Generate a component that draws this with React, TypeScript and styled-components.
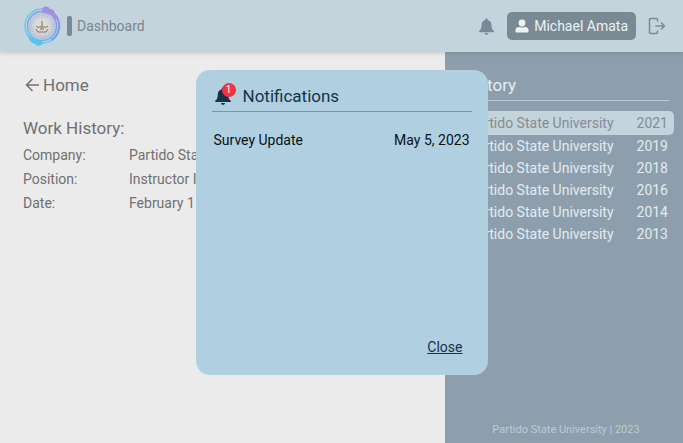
import React from 'react';
import styled, { createGlobalStyle } from 'styled-components';

const GlobalStyle = createGlobalStyle`
  *, *::before, *::after { box-sizing: border-box; }
  body {
    margin: 0;
    background: #ebebeb;
    font-family: Roboto, 'Liberation Sans', sans-serif;
    font-size: 14px;
    color: #707070;
  }
  h1, h2, p, dl, dd, ul { margin: 0; padding: 0; font-weight: 400; }
  button { font: inherit; border: 0; background: none; padding: 0; cursor: pointer; }
`;

const Page = styled.div`
  min-height: 100vh;
  display: flex;
  flex-direction: column;
`;

const Header = styled.header`
  display: flex;
  align-items: center;
  height: 52px;
  padding: 0 17px 0 24px;
  background: #c4d4dd;
  box-shadow: 0 1px 4px rgba(70, 80, 90, 0.25);
  z-index: 1;
`;

const Divider = styled.span`
  width: 5px;
  height: 20px;
  margin: 0 5px;
  border-radius: 2px;
  background: #798a96;
`;

const Title = styled.h1`
  font-size: 14px;
  color: #7b868d;
`;

const Actions = styled.div`
  display: flex;
  align-items: center;
  gap: 12px;
  margin-left: auto;
`;

const IconButton = styled.button`
  display: flex;
  color: #788a96;
`;

const UserButton = styled.button`
  display: flex;
  align-items: center;
  gap: 5px;
  height: 28px;
  padding: 0 8px;
  border-radius: 5px;
  background: #7a8a95;
  color: #edf1f4;
`;

const Body = styled.div`
  flex: 1;
  display: grid;
  grid-template-columns: minmax(0, 1fr) 238px;
`;

const Main = styled.main`
  padding: 23px;
`;

const BackLink = styled.a`
  display: inline-flex;
  align-items: center;
  gap: 4px;
  color: inherit;
  font-size: 17px;
  line-height: 20px;
  text-decoration: none;
`;

const SectionTitle = styled.h2`
  margin-top: 20px;
  font-size: 17px;
  line-height: 24px;
`;

const Details = styled.dl`
  display: grid;
  grid-template-columns: 106px 1fr;
  margin-top: 3px;
  line-height: 24px;
`;

const Sidebar = styled.aside`
  display: flex;
  flex-direction: column;
  padding: 22px 9px 4px;
  background: #8d9fac;
  color: #e7edf1;
`;

const SidebarTitle = styled.h2`
  margin: 0 5px 10px;
  padding: 0 3px 4px;
  border-bottom: 1px solid #bccbd5;
  font-size: 17px;
  line-height: 22px;
`;

const HistoryList = styled.ul`
  list-style: none;
`;

const HistoryItem = styled.button<{ $active?: boolean }>`
  display: flex;
  justify-content: flex-end;
  gap: 23px;
  width: 100%;
  padding: 0 6px;
  border-radius: 5px;
  line-height: ${(p) => (p.$active ? '24px' : '22px')};
  background: ${(p) => (p.$active ? '#c4d4dd' : 'transparent')};
  color: ${(p) => (p.$active ? '#858c90' : '#e4ebf0')};
`;

const Footer = styled.footer`
  margin-top: auto;
  padding-left: 4px;
  font-size: 11px;
  line-height: 18px;
  text-align: center;
  color: #bccbd5;
`;

const Overlay = styled.div`
  position: fixed;
  inset: 0;
  z-index: 2;
  display: flex;
  align-items: center;
  justify-content: center;
  padding-top: 2px;
`;

const Modal = styled.section`
  display: flex;
  flex-direction: column;
  width: 292px;
  min-height: 305px;
  padding: 12px 16px 17px;
  border-radius: 14px;
  background: #b0d0e1;
  color: #17324b;
`;

const ModalHeader = styled.div`
  display: flex;
  align-items: center;
  gap: 11px;
  padding: 0 2px 1px;
  border-bottom: 1px solid #7897ad;
`;

const ModalTitle = styled.h2`
  font-size: 17px;
  line-height: 28px;
`;

const BellHolder = styled.span`
  position: relative;
  display: flex;
`;

const Badge = styled.span`
  position: absolute;
  top: -4px;
  right: -4px;
  width: 14px;
  height: 14px;
  border-radius: 50%;
  background: #f5333f;
  color: #fff;
  font-size: 10px;
  line-height: 14px;
  text-align: center;
`;

const Notice = styled.p`
  display: flex;
  justify-content: space-between;
  padding: 0 2px;
  margin-top: 18px;
  line-height: 20px;
  color: #0b1117;
`;

const CloseButton = styled.button`
  align-self: flex-end;
  margin: auto 9px 0 0;
  color: inherit;
  line-height: 22px;
  text-decoration: underline;
`;

const Bell = ({ size }: { size: number }) => (
  <svg width={size} height={size} viewBox="0 0 18 18" fill="currentColor" aria-hidden="true">
    <path d="M9 .5c.8 0 1.300.5 1.300 1.200v.5C12.700 2.800 14.200 4.800 14.200 7.200c0 3.500.8 5.200 2.400 6.400.7.500.4 1.500-.5 1.500H1.900c-.9 0-1.200-1-.5-1.500C3 12.400 3.800 10.700 3.800 7.200c0-2.400 1.500-4.400 3.900-5v-.5C7.700 1 8.200.5 9 .5z" />
    <path d="M7 16h4c0 1-.8 1.800-2 1.800S7 17 7 16z" />
  </svg>
);

const Person = () => (
  <svg width="14" height="14" viewBox="0 0 14 14" fill="currentColor" aria-hidden="true">
    <circle cx="7" cy="4" r="3.400" />
    <path d="M.5 12.500V11c0-2 1.500-3 3.500-3 .7 0 1.500.5 3 .5S9.300 8 10 8c2 0 3.500 1 3.500 3v1.500c0 .6-.4 1-1 1h-11c-.6 0-1-.4-1-1z" />
  </svg>
);

const SignOut = () => (
  <svg width="18" height="18" viewBox="0 0 18 18" fill="none" stroke="currentColor" strokeWidth="1.500" strokeLinejoin="round" strokeLinecap="round" aria-hidden="true">
    <path d="M9.500 4V2.500c0-.6-.4-1-1-1h-6c-.6 0-1 .4-1 1v13c0 .6.400 1 1 1h6c.6 0 1-.4 1-1V14M8 9h8.500M13.500 6l3 3-3 3" />
  </svg>
);

const BackArrow = () => (
  <svg width="16" height="16" viewBox="0 0 16 16" fill="none" stroke="currentColor" strokeWidth="1.500" aria-hidden="true">
    <path d="M16 8H3.500M9.500 2L3.500 8l6 6" />
  </svg>
);

const Logo = () => (
  <svg width="38" height="40" viewBox="0 0 38 40" fill="none" aria-label="Partido State University" role="img">
    <defs>
      <linearGradient id="ring" x1="30" y1="3" x2="8" y2="36" gradientUnits="userSpaceOnUse">
        <stop offset="0" stopColor="#9d8fe4" />
        <stop offset=".5" stopColor="#6fa5e8" />
        <stop offset="1" stopColor="#58c4ee" />
      </linearGradient>
    </defs>
    <circle cx="18" cy="20" r="17" stroke="#72c5eb" strokeWidth="1.500" />
    <path d="M20 3a17 17 0 0 1 7 31.500" stroke="url(#ring)" strokeWidth="2" />
    <circle cx="18" cy="20" r="14.500" stroke="url(#ring)" strokeWidth="1.500" />
    <circle cx="18" cy="20" r="12.500" fill="#cdd2dc" stroke="#b8b5cd" />
    <circle cx="18" cy="20" r="10.500" stroke="#9d9cae" strokeDasharray="1 2" />
    <path d="M18 4c0-4 6-5 8-1 3 0 5 2 5 5 2 2 2 4 1 6-4-5-8-7-13-7-1-1-1-2-1-3z" fill="#9d91e3" />
    <path d="M4 28c4 5 8 6 12 6 3 1 4 4 1 5-3 2-5 0-6-1-4-1-7-5-7-10z" fill="#58c1ed" />
    <circle cx="18" cy="20" r="7.500" fill="#dedbd5" />
    <path d="M18 15v6M12 20l3 2M24 20l-3 2M15 21h6M12 23l2 3h8l2-3" stroke="#77736d" />
    <path d="M16 22h4v2h-4z" fill="#bd9c70" />
  </svg>
);

const details = [
  ['Company:', 'Partido State University'],
  ['Position:', 'Instructor I'],
  ['Date:', 'February 1 2021'],
];

const years = [2021, 2019, 2018, 2016, 2014, 2013];

export default function App() {
  return (
    <Page>
      <GlobalStyle />
      <Header>
        <Logo />
        <Divider />
        <Title>Dashboard</Title>
        <Actions>
          <IconButton aria-label="Notifications"><Bell size={17} /></IconButton>
          <UserButton><Person />Michael Amata</UserButton>
          <IconButton aria-label="Sign out"><SignOut /></IconButton>
        </Actions>
      </Header>
      <Body>
        <Main>
          <BackLink href="#home"><BackArrow />Home</BackLink>
          <SectionTitle>Work History:</SectionTitle>
          <Details>
            {details.map(([label, value]) => (
              <React.Fragment key={label}>
                <dt>{label}</dt>
                <dd>{value}</dd>
              </React.Fragment>
            ))}
          </Details>
        </Main>
        <Sidebar>
          <SidebarTitle>History</SidebarTitle>
          <HistoryList>
            {years.map((year, i) => (
              <li key={year}>
                <HistoryItem $active={i === 0}>
                  <span>Partido State University</span>
                  <span>{year}</span>
                </HistoryItem>
              </li>
            ))}
          </HistoryList>
          <Footer>Partido State University | 2023</Footer>
        </Sidebar>
      </Body>
      <Overlay>
        <Modal role="dialog" aria-labelledby="notifications-title">
          <ModalHeader>
            <BellHolder><Bell size={18} /><Badge>1</Badge></BellHolder>
            <ModalTitle id="notifications-title">Notifications</ModalTitle>
          </ModalHeader>
          <Notice><span>Survey Update</span><span>May 5, 2023</span></Notice>
          <CloseButton>Close</CloseButton>
        </Modal>
      </Overlay>
    </Page>
  );
}
